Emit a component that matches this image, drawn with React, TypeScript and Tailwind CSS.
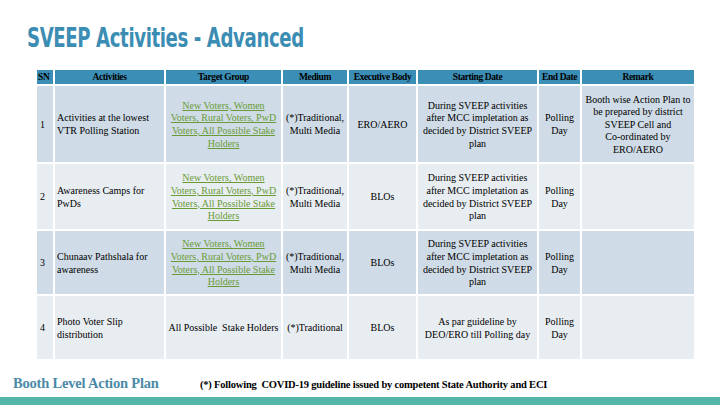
import React from "react";

const TG = "New Voters, Women\nVoters, Rural Voters, PwD\nVoters,  All Possible Stake\nHolders";
const START = "During SVEEP activities\nafter MCC impletation  as\ndecided by District SVEEP\nplan";

type Row = {
  sn: string;
  act: string;
  tg: string;
  link: boolean;
  med: string;
  exec: string;
  start: string;
  end: string;
  remark: string;
  h: string;
  bg: string;
};

const rows: Row[] = [
  {
    sn: "1",
    act: "Activities at the lowest\nVTR Polling Station",
    tg: TG,
    link: true,
    med: "(*)Traditional,\nMulti Media",
    exec: "ERO/AERO",
    start: "During SVEEP activities\nafter MCC impletation as\ndecided by District SVEEP\nplan",
    end: "Polling\nDay",
    remark: "Booth wise Action Plan to\nbe prepared by district\nSVEEP Cell and\nCo-ordinated by\nERO/AERO",
    h: "h-[76px]",
    bg: "bg-[#cfdbe6]",
  },
  {
    sn: "2",
    act: "Awareness Camps for\nPwDs",
    tg: TG,
    link: true,
    med: "(*)Traditional,\nMulti Media",
    exec: "BLOs",
    start: START,
    end: "Polling\nDay",
    remark: "",
    h: "h-[65px]",
    bg: "bg-[#e8edf2]",
  },
  {
    sn: "3",
    act: "Chunaav Pathshala for\nawareness",
    tg: TG,
    link: true,
    med: "(*)Traditional,\nMulti Media",
    exec: "BLOs",
    start: START,
    end: "Polling\nDay",
    remark: "",
    h: "h-[63px]",
    bg: "bg-[#cfdbe6]",
  },
  {
    sn: "4",
    act: "Photo Voter  Slip\ndistribution",
    tg: "All Possible  Stake Holders",
    link: false,
    med: "(*)Traditional",
    exec: "BLOs",
    start: "As par guideline by\nDEO/ERO till Polling day",
    end: "Polling\nDay",
    remark: "",
    h: "h-[63px]",
    bg: "bg-[#e8edf2]",
  },
];

const headers = [
  "SN",
  "Activities",
  "Target Group",
  "Medium",
  "Executive Body",
  "Starting Date",
  "End Date",
  "Remark",
];

export default function App() {
  const cell = "flex items-center text-[10px] leading-[12.6px] whitespace-pre-line pt-[2px]";
  return (
    <div className="w-[720px] h-[405px] bg-white flex flex-col overflow-hidden relative">
      <div className="pl-[27px] pt-[22px] h-[66px]">
        <h1 className="[font-family:'DejaVu_Sans_Condensed','DejaVu_Sans',sans-serif] text-[#3b8db3] text-[26px] leading-[32px] font-bold tracking-[-0.5px] origin-left scale-x-[0.775] whitespace-nowrap">
          SVEEP Activities - Advanced
        </h1>
      </div>
      <div className="pl-[37px] mt-[4px]">
        <div className="grid grid-cols-[16px_109px_115px_64px_67px_119px_41px_112px] gap-[2px] w-[657px] text-black [font-family:'Liberation_Serif',serif]">
          {headers.map((h, i) => (
            <div
              key={h}
              className={`h-[14px] bg-[#3b8fb7] flex items-center ${i === 0 ? "justify-start pl-[1px]" : "justify-center"} text-[9.5px] font-bold leading-[10px] tracking-[-0.4px] whitespace-nowrap`}
            >
              {h}
            </div>
          ))}
          {rows.map((r) => (
            <React.Fragment key={r.sn}>
              <div className={`${r.h} ${r.bg} ${cell} justify-start pl-[3px]`}>{r.sn}</div>
              <div className={`${r.h} ${r.bg} ${cell} pl-[2px]`}>{r.act}</div>
              <div className={`${r.h} ${r.bg} ${cell} justify-center text-center`}>
                {r.link ? (
                  <span className="text-[#6b9b37] underline decoration-[#6b9b37] underline-offset-[1px] whitespace-pre-line">{r.tg}</span>
                ) : (
                  <span className="whitespace-pre">{r.tg}</span>
                )}
              </div>
              <div className={`${r.h} ${r.bg} ${cell} justify-center text-center`}>{r.med}</div>
              <div className={`${r.h} ${r.bg} ${cell} justify-center text-center`}>{r.exec}</div>
              <div className={`${r.h} ${r.bg} ${cell} justify-center text-center`}>{r.start}</div>
              <div className={`${r.h} ${r.bg} ${cell} justify-center text-center`}>{r.end}</div>
              <div className={`${r.h} ${r.bg} ${cell} justify-center text-center`}>{r.remark}</div>
            </React.Fragment>
          ))}
        </div>
      </div>
      <div className="flex items-center mt-[15px] h-[18px] [font-family:'Liberation_Serif',serif]">
        <div className="pl-[13px] w-[200px] text-[#4a8aa7] text-[14.5px] font-bold leading-[18px] tracking-[-0.2px] whitespace-nowrap">
          Booth Level Action Plan
        </div>
        <div className="text-[10.5px] font-bold leading-[12px] text-black whitespace-pre tracking-[-0.2px] mt-[3px]">
          (*) Following  COVID-19 guideline issued by competent State Authority and ECI
        </div>
      </div>
      <div className="mt-auto h-[8px] bg-[#54b5a9]" />
    </div>
  );
}
